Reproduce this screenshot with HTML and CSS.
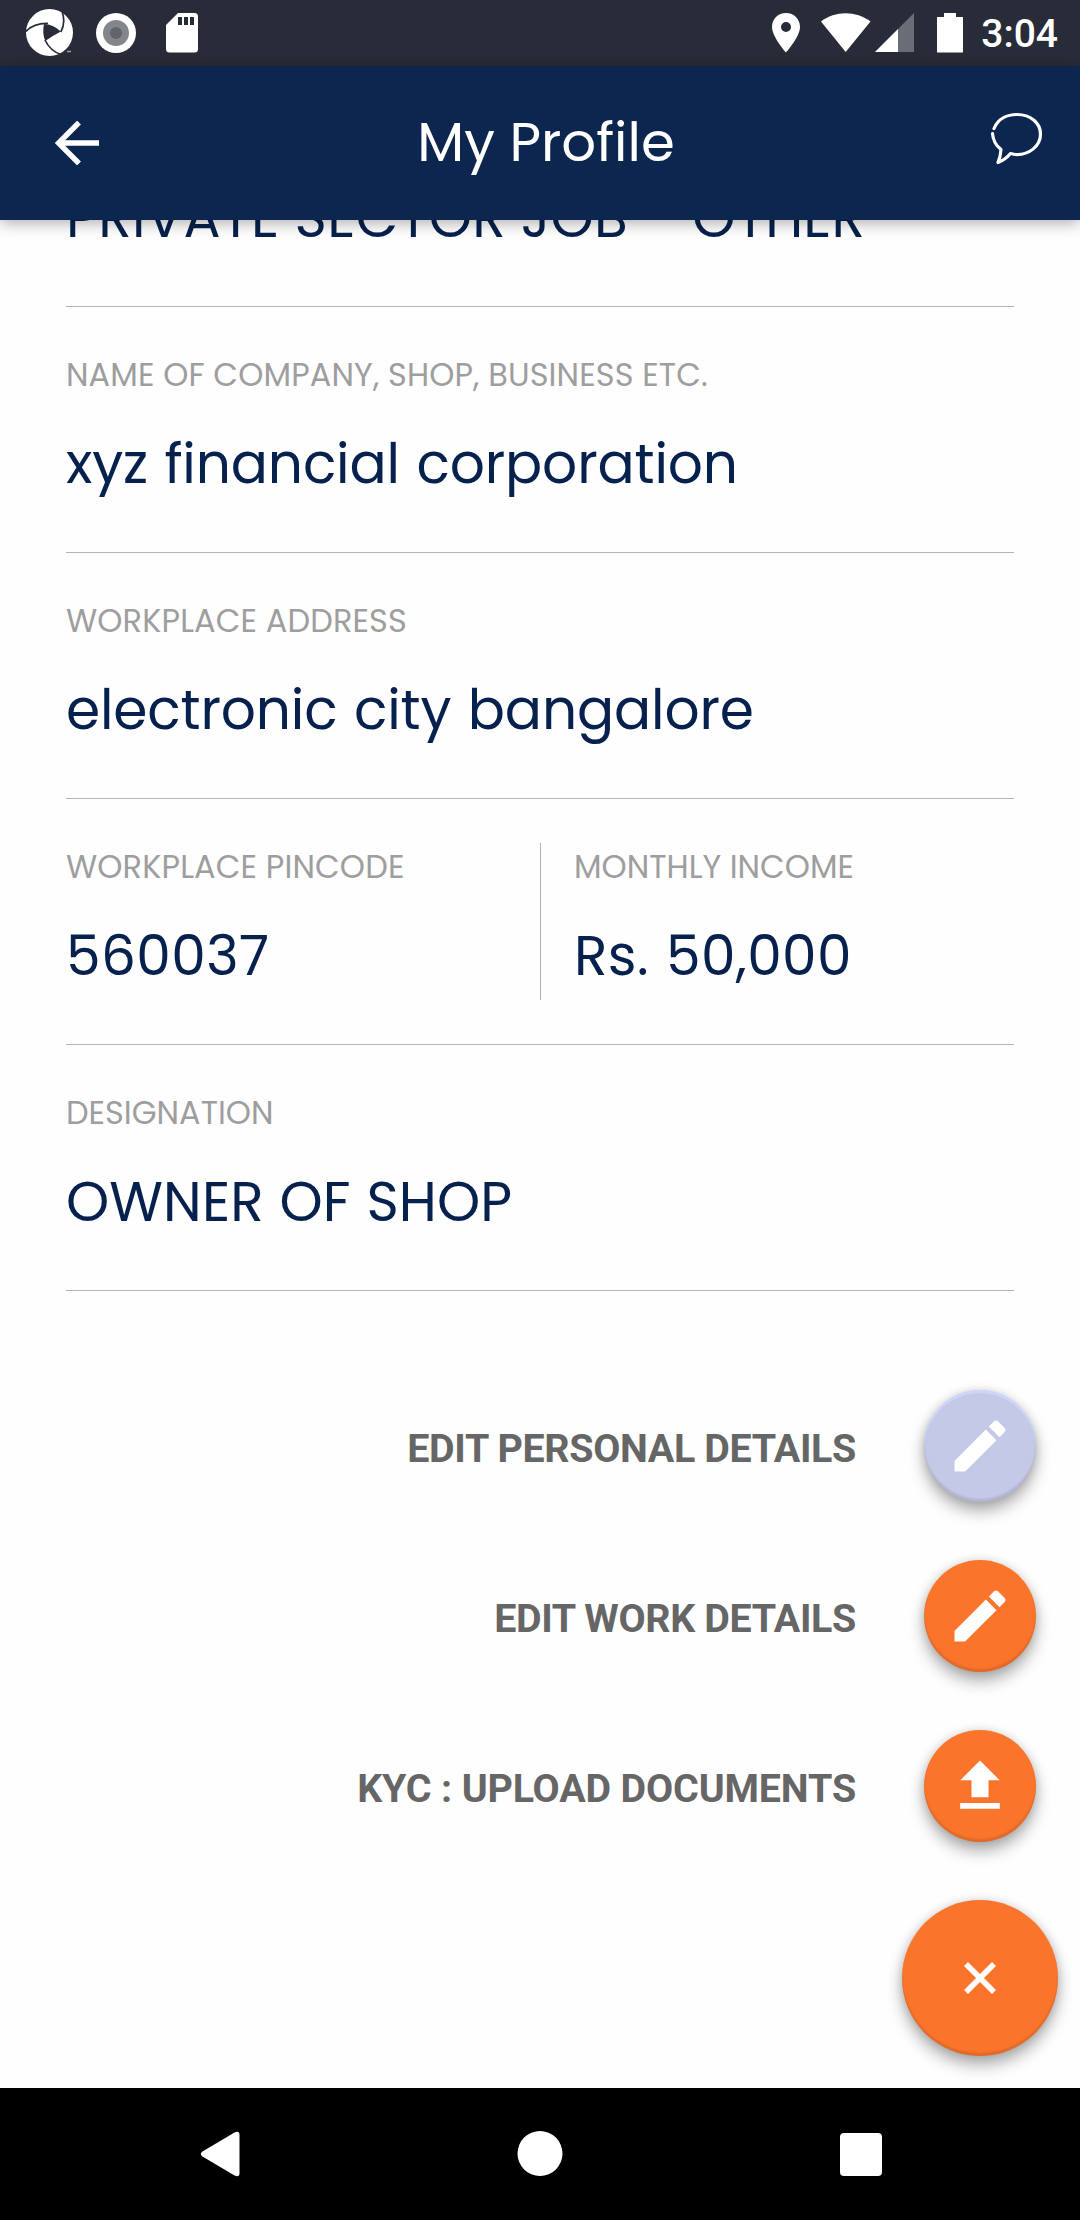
FILE: index.html
```html
<!DOCTYPE html>
<html lang="en">
<head>
<meta charset="utf-8">
<title>My Profile</title>
<link rel="stylesheet" href="styles.css">
</head>
<body>
<div class="screen">
  <div class="status-bar">
    <div class="status-left">
      <svg width="48" height="48" viewBox="0 0 48 48"><circle cx="23.5" cy="23.5" r="23.5" fill="#fff"/><path d="M18 15Q27 15 34.8 22.5Q28 26 19.2 32Q16 24 18 15Z" fill="#282c38"/><path d="M22 14.5Q8 14 0 22.500M34.800 23Q40 14 36 2M19 31Q24 42 36 46" fill="none" stroke="#282c38" stroke-width="1.700"/><path d="M41 42.500h4" stroke="#9da0a6" stroke-width="1.500"/></svg>
      <svg class="record" width="40" height="40" viewBox="0 0 40 40"><circle cx="20" cy="20" r="20" fill="#fff"/><circle cx="20" cy="20" r="13" fill="#83868c"/><circle cx="20" cy="20" r="6" fill="#60646c"/></svg>
      <svg class="sd-card" width="32" height="40" viewBox="0 0 32 40"><path d="M12 0H28.500Q32 0 32 3.500V36Q32 39.500 28.500 39.500H3.500Q0 39.500 0 36V12Z" fill="#fff"/><path d="M12 4h4v8h-4zM18 4h4v8h-4zM24 4h4v8h-4z" fill="#282c38"/></svg>
    </div>
    <div class="status-right">
      <svg width="28" height="40" viewBox="0 0 28 40"><path fill-rule="evenodd" d="M14 0C6 0 0 6 0 14C0 24 14 39.500 14 39.500S28 24 28 14C28 6 22 0 14 0ZM14 9a5 5 0 1 1 0 10a5 5 0 0 1 0-10Z" fill="#fff"/></svg>
      <svg class="wifi" width="50" height="40" viewBox="0 0 50 40"><path d="M0 8.500C14-2.500 35-2.500 49.500 8.500L24.700 39Z" fill="#fff"/></svg>
      <svg class="signal" width="39" height="40" viewBox="0 0 39 40"><path d="M39 0V39H0Z" fill="#696d76"/><path d="M23 16V39H0Z" fill="#fff"/></svg>
      <svg class="battery" width="26" height="40" viewBox="0 0 26 40"><path d="M7 0h12v4h7v35.500H0V4h7Z" fill="#fff"/></svg>
      <span class="clock">3:04</span>
    </div>
  </div>

  <header class="app-bar">
    <svg width="44" height="44" viewBox="0 0 44 44"><path d="M24 1.500L3.500 22L24 42.500M4 22H44" fill="none" stroke="#fff" stroke-width="5.400"/></svg>
    <h1 class="title">My Profile</h1>
    <svg class="chat" width="54" height="54" viewBox="0 0 54 54"><path d="M4 16.500C8 7 17 2.500 27 2.500C41 2.500 50.500 11.500 50.500 22C50.500 34 39 43.500 25 42.500L20.500 41.500Q15 48 8 50.500Q10.500 45 11 37.500C6 33.500 3 29 2.500 21.500" fill="none" stroke="#fff" stroke-width="3.200" stroke-linecap="round" stroke-linejoin="round"/></svg>
  </header>

  <main class="profile">
    <section class="row row-scrolled">
      <div class="value sector">PRIVATE SECTOR JOB</div>
      <div class="value">OTHER</div>
    </section>
    <section class="row"><div class="field">
      <div class="label label-long">NAME OF COMPANY, SHOP, BUSINESS ETC.</div>
      <div class="value lower">xyz financial corporation</div>
    </div></section>
    <section class="row"><div class="field">
      <div class="label label-long">WORKPLACE ADDRESS</div>
      <div class="value lower">electronic city bangalore</div>
    </div></section>
    <section class="row">
      <div class="field field-half">
        <div class="label label-long">WORKPLACE PINCODE</div>
        <div class="value numeric">560037</div>
      </div>
      <div class="field field-half field-second">
        <div class="label">MONTHLY INCOME</div>
        <div class="value numeric">Rs. 50,000</div>
      </div>
    </section>
    <section class="row"><div class="field">
      <div class="label">DESIGNATION</div>
      <div class="value upper">OWNER OF SHOP</div>
    </div></section>
  </main>

  <div class="fab-menu">
    <div class="action"><span class="action-label">EDIT PERSONAL DETAILS</span>
      <button class="fab fab-disabled"><svg width="68" height="68" viewBox="0 0 24 24"><path d="M3 17.250V21h3.750L17.810 9.940l-3.750-3.750L3 17.250zM20.710 7.040c.39-.39.39-1.020 0-1.410l-2.340-2.340c-.39-.39-1.020-.39-1.410 0l-1.830 1.830 3.750 3.750 1.830-1.830z" fill="#fff"/></svg></button></div>
    <div class="action"><span class="action-label">EDIT WORK DETAILS</span>
      <button class="fab"><svg width="68" height="68" viewBox="0 0 24 24"><path d="M3 17.250V21h3.750L17.810 9.940l-3.750-3.750L3 17.250zM20.710 7.040c.39-.39.39-1.020 0-1.410l-2.340-2.340c-.39-.39-1.020-.39-1.410 0l-1.830 1.830 3.750 3.750 1.830-1.830z" fill="#fff"/></svg></button></div>
    <div class="action"><span class="action-label action-label-upload">KYC : UPLOAD DOCUMENTS</span>
      <button class="fab"><svg width="68" height="68" viewBox="0 0 24 24"><path d="M9 16h6v-6h4l-7-7-7 7h4zm-4 2h14v2H5z" fill="#fff"/></svg></button></div>
    <button class="fab fab-main"><svg width="32" height="32" viewBox="0 0 32 32"><path d="M2 2L30 30M30 2L2 30" stroke="#fff" stroke-width="5.600"/></svg></button>
  </div>

  <nav class="nav-bar">
    <svg class="nav-back" width="40" height="46" viewBox="0 0 40 46"><path d="M34.500 1.500Q39.500-1 39.500 4V42Q39.500 47 34.500 44.500L2.500 25.500Q-1 23 2.500 20.500Z" fill="#fff"/></svg>
    <svg width="46" height="46" viewBox="0 0 46 46"><circle cx="23" cy="22.500" r="22.500" fill="#fff"/></svg>
    <svg class="nav-recent" width="42" height="43" viewBox="0 0 42 43"><rect width="42" height="43" rx="4" fill="#fff"/></svg>
  </nav>
</div>
</body>
</html>
```
FILE: styles.css
```css
* { box-sizing: border-box; }
body { margin: 0; background: #fefefe; font-family: Poppins, Inter, sans-serif; }
svg { display: block; flex: none; }
.screen { width: 1080px; height: 2220px; display: flex; flex-direction: column; overflow: hidden; }

.status-bar { height: 66px; flex: none; display: flex; justify-content: space-between; padding: 9px 22px 0 26px; background: #282c38; }
.status-left, .status-right { display: flex; align-items: flex-start; }
.record { margin: 4px 0 0 22px; }
.sd-card { margin: 4px 0 0 30px; }
.status-right { padding-top: 4px; }
.wifi { margin-left: 21px; }
.signal { margin-left: 4px; }
.battery { margin-left: 23px; }
.clock { margin-left: 18px; font: 500 39px/42px Roboto, sans-serif; color: #fff; }

.app-bar { height: 154px; flex: none; display: flex; align-items: center; justify-content: space-between; padding: 0 36px 0 55px; background: #0d264f; box-shadow: 0 3px 14px rgba(0, 0, 0, .32); position: relative; z-index: 1; }
.title { margin: -3px 0 0 3px; font-size: 54.500px; font-weight: 400; line-height: 70px; color: #fff; }
.chat { margin-top: -9px; }

.profile { flex: none; padding: 0 66px; }
.row { height: 246px; display: flex; align-items: center; border-bottom: 1px solid #b4b4b4; }
.row-scrolled { height: 87px; align-items: flex-end; gap: 64px; padding-bottom: 53px; }
.field { flex: none; height: 157px; }
.field-half { width: 474px; }
.field-second { border-left: 1px solid #b0b0b0; padding-left: 33px; }
.label { font-size: 32px; line-height: 48px; color: #9e9e9e; white-space: nowrap; }
.label-long { letter-spacing: .12px; }
.value { font-size: 55px; line-height: 70px; margin-top: 30px; color: #06214d; white-space: nowrap; }
.sector { letter-spacing: .35px; }
.lower { letter-spacing: -.15px; word-spacing: 2px; }
.upper { letter-spacing: .1px; word-spacing: 1px; }
.numeric { letter-spacing: .4px; word-spacing: 2px; }

.fab-menu { flex: 1; display: flex; flex-direction: column; align-items: flex-end; gap: 58px; padding: 99px 22px 0 0; }
.action { display: flex; align-items: center; gap: 68px; height: 112px; padding-right: 22px; }
.action-label { padding-top: 5px; font: 700 39.4px/46px Roboto, sans-serif; letter-spacing: -.34px; color: #666; }
.action-label-upload { letter-spacing: -.15px; }
.fab { width: 112px; height: 112px; border: 0; padding: 0; border-radius: 50%; background: #fa742b; display: flex; align-items: center; justify-content: center; box-shadow: 0 9px 16px rgba(0, 0, 0, .32), 0 0 10px rgba(0, 0, 0, .12), inset 0 -3px 2px rgba(0, 0, 0, .1); }
.fab-disabled { background: #c5c9e8; box-shadow: 0 9px 16px rgba(0, 0, 0, .32), 0 0 10px rgba(0, 0, 0, .12), inset 0 -3px 2px rgba(0, 0, 0, .1), inset 0 3px 1px #d0d6fb; }
.fab-main { width: 156px; height: 156px; }

.nav-bar { height: 132px; flex: none; display: flex; align-items: center; justify-content: space-between; padding: 0 198px 0 200px; background: #000; }
```
